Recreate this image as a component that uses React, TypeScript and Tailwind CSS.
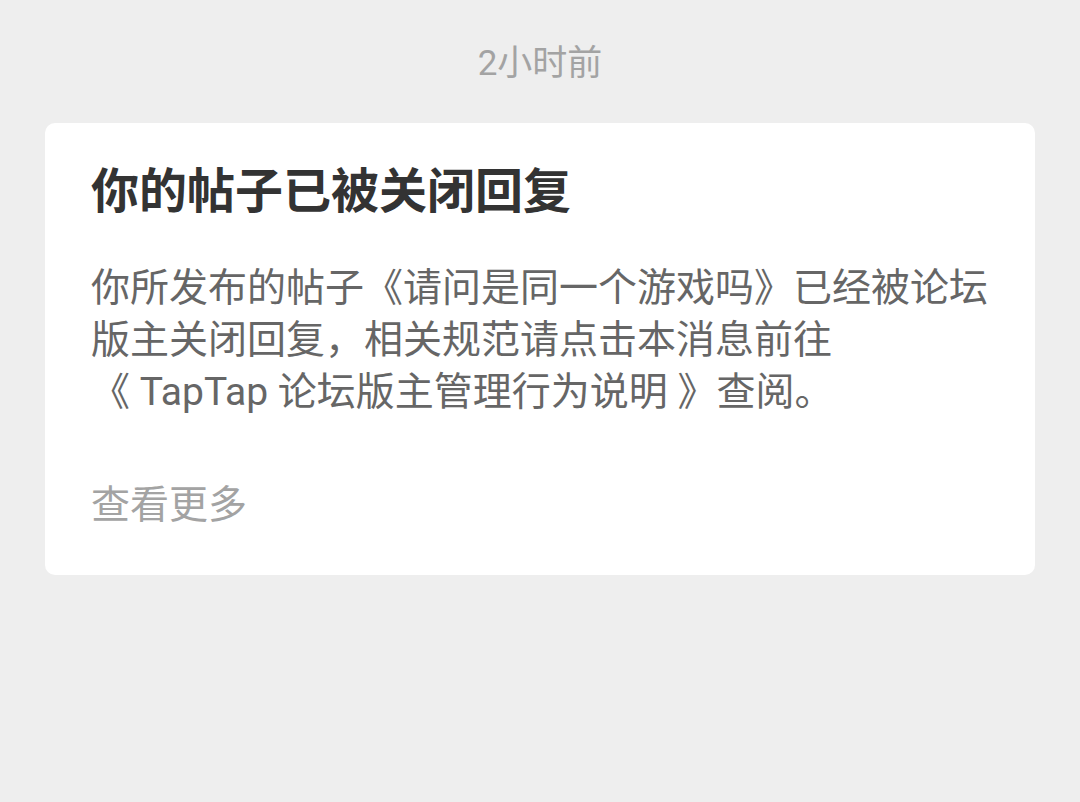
export default function App() {
  return (
    <div
      className="min-h-screen bg-[#eeeeee] pt-[40px]"
      style={{ fontFamily: 'Roboto, "Noto Sans CJK SC", sans-serif' }}
    >
      <div className="text-center text-[35px] leading-[48px] text-[#a3a3a3]">2小时前</div>

      <div className="mx-[45px] mt-[35px] rounded-[10px] bg-white px-[46px] pt-[41px] pb-[44px]">
        <h1 className="text-[48px] font-bold leading-[56px] text-[#333333]">你的帖子已被关闭回复</h1>
        <p className="mt-[42px] text-[39px] leading-[52px] text-[#666666]">
          你所发布的帖子《请问是同一个游戏吗》已经被论坛
          <br />
          版主关闭回复，相关规范请点击本消息前往
          <br />
          《 TapTap 论坛版主管理行为说明 》查阅。
        </p>
        <div className="mt-[61px] text-[39px] leading-[52px] text-[#a3a3a3]">查看更多</div>
      </div>
    </div>
  );
}
